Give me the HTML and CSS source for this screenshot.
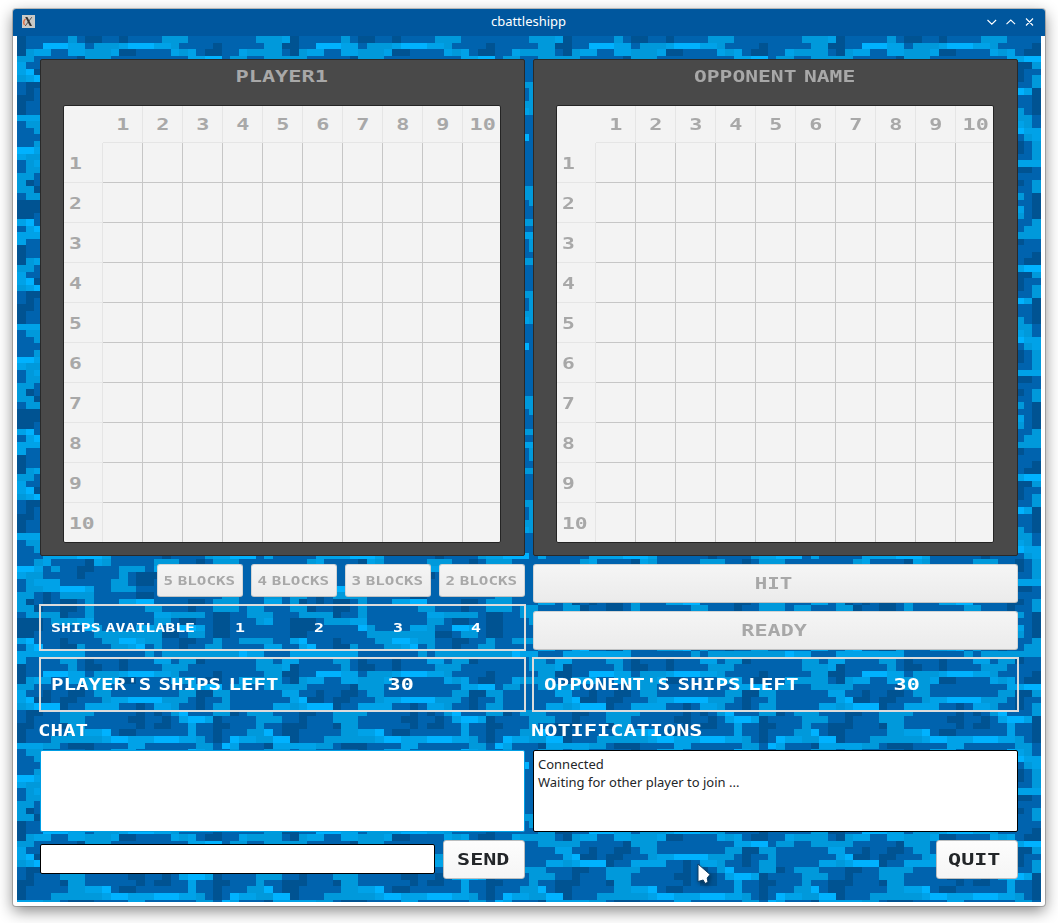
FILE: index.html
```html
<!DOCTYPE html>
<html lang="en">
<head>
<meta charset="utf-8">
<title>cbattleshipp</title>
<link rel="stylesheet" href="styles.css">
</head>
<body>
<div class="window">
  <header class="titlebar">
    <svg class="app-icon" width="13" height="13" viewBox="0 0 13 13"><rect width="13" height="13" fill="#c9c9c6"/><path d="M3.500 4Q0.500 6.500 2.500 10" stroke="#e3693c" stroke-width="1.300" fill="none"/><path d="M9.800 2.200L3.200 11" stroke="#555" stroke-width="1"/><path d="M3.200 2h2.200l4.600 9H7.800z" fill="#333"/></svg>
    <span class="caption">cbattleshipp</span>
    <svg class="controls" width="50" height="12" viewBox="0 0 50 12" fill="none" stroke="#fff" stroke-width="1.1"><path d="M1.500 4l4.300 4.200L10.100 4M20.500 8.200l4.300-4.200 4.300 4.200M40 2.500l7 7M47 2.500l-7 7"/></svg>
  </header>
  <main class="sea">
    <canvas class="waves" id="waves" width="1024" height="866"></canvas>
    <div class="columns">
      <section class="side">
        <div class="board"><h2 class="board-title"><span class="px w137">PLAYER1</span></h2><div class="grid"></div></div>
        <div class="blocks">
          <button class="btn small"><span class="px">5 BLOCKS</span></button>
          <button class="btn small"><span class="px">4 BLOCKS</span></button>
          <button class="btn small"><span class="px">3 BLOCKS</span></button>
          <button class="btn small"><span class="px">2 BLOCKS</span></button>
        </div>
        <div class="frame available"><span class="name"><span class="px start">SHIPS AVAILABLE</span></span><span class="count"><b class="px">1</b></span><span class="count"><b class="px">2</b></span><span class="count"><b class="px">3</b></span><span class="count"><b class="px">4</b></span></div>
        <div class="frame left-count"><span class="name"><span class="px start w130">PLAYER'S SHIPS LEFT</span></span><span class="total"><span class="px">30</span></span></div>
        <h3 class="label"><span class="px start w130">CHAT</span></h3>
        <div class="log chat"></div>
        <div class="actions"><input class="message" type="text"><button class="btn live"><span class="px">SEND</span></button></div>
      </section>
      <section class="side">
        <div class="board"><h2 class="board-title"><span class="px w133">OPPONENT NAME</span></h2><div class="grid"></div></div>
        <div class="commands">
          <button class="btn wide"><span class="px w130">HIT</span></button>
          <button class="btn wide ready"><span class="px">READY</span></button>
        </div>
        <div class="frame left-count"><span class="name"><span class="px start w131">OPPONENT'S SHIPS LEFT</span></span><span class="total enemy"><span class="px">30</span></span></div>
        <h3 class="label"><span class="px start w137">NOTIFICATIONS</span></h3>
        <div class="log">Connected<br>Waiting for other player to join ...</div>
        <div class="actions end"><button class="btn live quit"><span class="px">QUIT</span></button></div>
      </section>
    </div>
    <svg class="pointer" width="16" height="24" viewBox="0 0 16 24"><path d="M2 2v17.500l5.200-1.500 1.800 3.500 3-1.300-.8-4.200L14 12.500z" fill="#fff" stroke="#0c3f68" stroke-width="1" stroke-linejoin="round"/></svg>
  </main>
</div>
<script src="app.js"></script>
</body>
</html>
```
FILE: styles.css
```css
* { box-sizing: border-box; }
body { margin: 0; height: 923px; overflow: hidden; background: #fff; font-family: "Noto Sans", sans-serif; font-size: 13px; color: #232629; }
.window { width: 1032px; height: 897px; margin: 9px 0 0 13px; background: #fff; border-radius: 3px; box-shadow: 0 0 0 1px rgba(0,0,0,.2), 0 5px 15px rgba(0,0,0,.48); }
.titlebar { height: 27px; padding: 0 9px 2px 9px; display: grid; grid-template-columns: 60px 1fr 50px; align-items: center; background: #00579e; color: #fff; border-radius: 3px 3px 0 0; }
.app-icon { display: block; }
.caption { text-align: center; padding-right: 11px; line-height: 25px; }
.controls { display: block; justify-self: end; }
.sea { position: relative; width: 1024px; height: 866px; margin: 0 4px; padding: 23px; background: #0063ae; overflow: hidden; }
.waves { position: absolute; left: 0; top: 0; display: block; }
.columns { position: relative; display: flex; gap: 8px; }
.side { width: 485px; display: flex; flex-direction: column; }

.px { display: inline-block; font-family: "DejaVu Sans Mono", monospace; font-weight: bold; font-size: 16px; line-height: 18px; white-space: nowrap; word-spacing: -4px; transform: scaleX(1.36); }
.px.start { transform-origin: left center; }
.px.w130 { transform: scaleX(1.3); }
.px.w131 { transform: scaleX(1.31); }
.px.w133 { transform: scaleX(1.33); }
.px.w137 { transform: scaleX(1.37); }

.board { height: 497px; padding: 0 22px; background: #494949; border: 1px solid #292929; border-radius: 2px; color: #a8a8a8; }
.board-title { margin: 0; height: 45px; padding-top: 7px; text-align: center; line-height: 18px; font-size: 16px; }
.board-title .px { margin-left: -2px; }
.grid { width: 438px; height: 438px; display: grid; grid-template-columns: 39px repeat(9, 40px) 37px; grid-template-rows: 37px repeat(9, 40px) 39px; background: #f3f3f3; border: 1px solid #242424; border-radius: 2px; overflow: hidden; }
.cell { border-right: 1px solid #c6c6c6; border-bottom: 1px solid #c6c6c6; }
.cell.last-col { border-right: 0; }
.cell.last-row { border-bottom: 0; }
.head { display: flex; align-items: center; justify-content: center; padding-top: 2px; border-color: #e5e5e5; }
.head.last-col .px { margin-left: 3px; }
.head.row { justify-content: flex-start; padding-left: 6px; }
.head.row .px { transform-origin: left center; transform: scaleX(1.33); margin-left: -1px; }
.head.corner { border-right-color: transparent; border-bottom-color: transparent; }

.btn { display: flex; align-items: center; justify-content: center; padding: 0; border: 1px solid #d2d4d5; border-bottom-color: #c0c2c3; border-radius: 3px; background: linear-gradient(#f5f5f5, #ebebeb); color: #a8a8a8; }
.blocks { display: flex; justify-content: flex-end; gap: 8px; margin-top: 8px; }
.small { width: 86px; height: 33px; }
.small .px { font-size: 13px; margin-left: -2px; transform: scaleX(1.22); }
.commands { display: flex; flex-direction: column; gap: 8px; margin-top: 8px; }
.wide { height: 39px; }
.wide .px { margin-left: -4px; }
.ready .px { margin-left: -2px; }
.live { width: 82px; height: 39px; background: linear-gradient(#fdfdfd, #f5f5f5); border-color: #bcbebf; color: #232629; }
.live .px { margin-left: -2px; }
.quit .px { margin-left: -5px; }

.frame { display: flex; align-items: center; width: 487px; margin-left: -1px; border: 2px solid #dcdcdc; color: #fff; padding-left: 10px; }
.available { height: 47px; margin-top: 7px; }
.available .px { font-size: 13px; transform: scaleX(1.27); }
.available .name { width: 150px; }
.available .count { width: 78.7px; text-align: center; }
.left-count { height: 55px; margin-top: 6px; }
.commands + .left-count { margin-top: 7px; }
.left-count .name { width: 340px; }
.left-count .total { width: 20px; text-align: center; }
.left-count .enemy { margin-left: 13px; }
.label { margin: 0 0 0 -2px; height: 38px; padding-top: 9px; color: #fff; line-height: 18px; font-size: 16px; }
.log { height: 82px; padding: 4px; background: #fff; border: 1px solid #000; border-radius: 2px; line-height: 18px; }
.chat { border-color: #009ee4; }
.actions { display: flex; gap: 8px; margin-top: 8px; align-items: center; }
.actions.end { justify-content: flex-end; }
.message { width: 395px; height: 30px; margin: 0 0 1px; border: 1px solid #000; border-radius: 2px; background: #fff; padding: 4px; }
.pointer { position: absolute; left: 679px; top: 826px; filter: drop-shadow(1px 2px 2px rgba(0,0,0,.4)); }
```
FILE: app.js
```js
// Wave texture: one 32x32 tile, repeated over a 120x120 cell image.
const tile = [
  "d.....c.dd..d....ccc........ccce",
  "d..lllee.cccellleec....d.....ccd",
  "dcee..eecccedd....ece.dd..ecccc.",
  "cc.....dccc.........eell.cc..ccc",
  "e..d..dd.cc........ccddcc......e",
  "eldd.dd...ceellllccc.d..c.......",
  "cellld..eeee..d.eec..d.cc.....ee",
  ".dd..cccc.....d.d.cl...ccd.ccc..",
  ".d...ccc.....dd..d.elled....ccc.",
  "dd...dcc......d.dd..e..dd...c..d",
  "d.....cceel.dd......e..d...ccl.d",
  "d...cccccceLLeeeLLLeec.d.leeccll",
  "eeecc.ddd....ee......cc.le...dee",
  ".cc.....d..eee......lec..c...ccc",
  "..c....dd....e......elee..d...c.",
  "...eeeellle......d....ceelll.e..",
  "..ce....dec.....ccc..d.ccc......",
  "lle.c..dd...ccc.ee...d.cc....ee.",
  "ecc....d....c.ddd......cc....ee.",
  ".ceee......cc.dd.....eee........",
  ".cceellle..ccc......edd......dd.",
  "cc.d.cccc.....dd........cc...cc.",
  "cd.d.dd.c...eell....dd.ccc...ee.",
  "ccd..dd.c......cc...d..ccc.cc...",
  ".ccccd..c.......eecccc.dd..ccc..",
  "ddd.cccee.......cc.dd..dd...ce..",
  "ddd.....lc....eec..lle.dd.......",
  "dd.......ccccccccdd.cc.dd.......",
  "el...d....ccllecc..dd..c..cccc..",
  ".el..ddc...ccel.c..d..cc.....ee.",
  "eeeeeeee.......c.ccccccccclee...",
  "e....cc.d...d...ee.ccd......cc.e"
];
const shades = { d: "#005392", c: "#0099db", e: "#00a2e8", l: "#00b2ff" };
const ctx = document.getElementById("waves").getContext("2d");
const cw = 1024 / 120, ch = 785 / 120;
for (let oy = 0; oy < 866; oy += 785) {
  for (let r = 0; r < 120; r++) {
    for (let c = 0; c < 120; c++) {
      const shade = shades[tile[r % 32][c % 32].toLowerCase()];
      if (!shade) continue;
      const x = Math.round(c * cw), y = Math.round(r * ch);
      ctx.fillStyle = shade;
      ctx.fillRect(x, oy + y, Math.round((c + 1) * cw) - x, Math.round((r + 1) * ch) - y);
    }
  }
  // The next image starts on a clean base colour.
  ctx.fillStyle = "#0063ae";
  ctx.fillRect(0, oy + 785, 1024, 785);
}

// Board cells: row 0 and column 0 carry the coordinates.
for (const grid of document.querySelectorAll(".grid")) {
  for (let r = 0; r <= 10; r++) {
    for (let c = 0; c <= 10; c++) {
      const cell = document.createElement("div");
      cell.className = "cell";
      if (r === 10) cell.classList.add("last-row");
      if (c === 10) cell.classList.add("last-col");
      if (r === 0 || c === 0) {
        cell.classList.add("head");
        if (c === 0) cell.classList.add(r === 0 ? "corner" : "row");
        if (r + c > 0) {
          const n = document.createElement("span");
          n.className = "px";
          n.textContent = r + c;
          cell.append(n);
        }
      }
      grid.append(cell);
    }
  }
}
```
